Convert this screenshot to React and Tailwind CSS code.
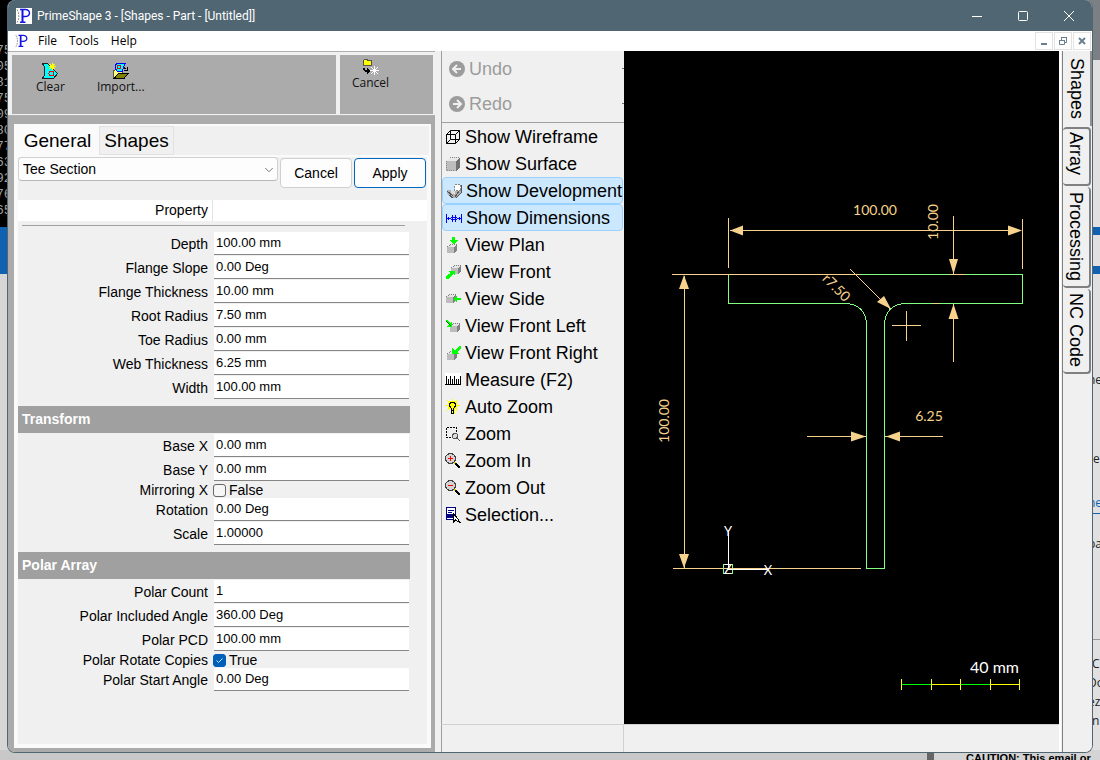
import { ChevronDown } from 'lucide-react';

const generalFields = [
    { id: 'depth', label: 'Depth', value: '100.00 mm' },
    { id: 'flange-slope', label: 'Flange Slope', value: '0.00 Deg' },
    { id: 'flange-thickness', label: 'Flange Thickness', value: '10.00 mm' },
    { id: 'root-radius', label: 'Root Radius', value: '7.50 mm' },
    { id: 'toe-radius', label: 'Toe Radius', value: '0.00 mm' },
    { id: 'web-thickness', label: 'Web Thickness', value: '6.25 mm' },
    { id: 'width', label: 'Width', value: '100.00 mm' }
];

const transformFields = [
    { id: 'base-x', label: 'Base X', value: '0.00 mm' },
    { id: 'base-y', label: 'Base Y', value: '0.00 mm' },
    { id: 'mirroring-x', label: 'Mirroring X', checked: false },
    { id: 'rotation', label: 'Rotation', value: '0.00 Deg' },
    { id: 'scale', label: 'Scale', value: '1.00000' }
];

const polarFields = [
    { id: 'polar-count', label: 'Polar Count', value: '1' },
    { id: 'polar-angle', label: 'Polar Included Angle', value: '360.00 Deg' },
    { id: 'polar-pcd', label: 'Polar PCD', value: '100.00 mm' },
    { id: 'polar-rotate', label: 'Polar Rotate Copies', checked: true },
    { id: 'polar-start', label: 'Polar Start Angle', value: '0.00 Deg' }
];

const Icon = ({ children }) => (
    <svg className="w-4 h-4 shrink-0" viewBox="0 0 16 16" fill="none" shapeRendering="crispEdges" aria-hidden="true">
        {children}
    </svg>
);

// Small shaded box used by the view icons
const Cube = ({ x, y }) => (
    <g transform={`translate(${x} ${y})`}>
        <path d="M0 3L3 0H10V6L7 9H0Z" fill="#e4e4e4" />
        <path d="M0 3H7V9H0Z" fill="#bcbcbc" />
        <path d="M7 3L10 0V6L7 9Z" fill="#808080" />
        <path d="M0.5 3L3 0.5H10" stroke="#808080" strokeDasharray="1 1" />
    </g>
);

const Magnifier = ({ minus }) => (
    <>
        <circle cx="5.5" cy="5.5" r="5" fill="#d4d4d4" stroke="#404040" />
        <path d="M3 5.5H8" stroke="#f00" />
        {!minus && <path d="M5.5 3V8" stroke="#f00" />}
        <path d="M9.5 9.5L11.5 11.5" stroke="#d8d800" strokeWidth="2" />
        <path d="M10.5 10.5L15 15" stroke="#000" strokeWidth="2" />
    </>
);

const viewItems = [
    {
        label: 'Show Wireframe',
        icon: <path d="M1.5 5.5H10.5V14.5H1.5ZM5.5 1.5H14.5V10.5H5.5ZM1.5 5.5L5.5 1.5M10.5 5.5L14.5 1.5M1.5 14.5L5.5 10.5M10.5 14.5L14.5 10.5" stroke="#000" shapeRendering="auto" />
    },
    {
        label: 'Show Surface',
        icon: (
            <>
                <path d="M1 5L5 1H15L11 5Z" fill="#e8e8e8" />
                <path d="M1 5H11V15H1Z" fill="#bdbdbd" />
                <path d="M11 5L15 1V11L11 15Z" fill="#707070" />
                <path d="M1.5 5V14.5H10M5 1.5H15" stroke="#888" strokeDasharray="1 1" />
            </>
        )
    },
    {
        label: 'Show Development',
        active: true,
        icon: (
            <>
                <path d="M8.5 1.5H14.5V7.5H8.5Z" fill="#fff" stroke="#888" strokeDasharray="2 1" />
                <path d="M1 7H4L7 10L9 8H15L14 12L10 15H6L1 11Z" fill="#b0b0b0" />
                <path d="M1 8L7 13M13 8L9 14M3 12L7 15" stroke="#555" />
                <path d="M5 8H9V11H6Z" fill="#ddd" />
                <path d="M15 2V10L10 15" stroke="#555" />
            </>
        )
    },
    {
        label: 'Show Dimensions',
        active: true,
        icon: <path d="M0.5 4V13M15.5 4V13M1 8.5H5M11 8.5H15M2.5 7V10M13.5 7V10M5 7.5H11M5 9.5H11M7 5L6 12M10 5L9 12" stroke="#00f" />
    },
    {
        label: 'View Plan',
        icon: (
            <>
                <Cube x={2} y={7} />
                <path d="M7 0H10V3H13L8.5 7.5L4 3H7Z" fill="#0f0" />
            </>
        )
    },
    {
        label: 'View Front',
        icon: (
            <>
                <Cube x={6} y={1} />
                <path d="M3 7H10V12L8 10L3 15H1V12L6 9Z" fill="#0f0" />
            </>
        )
    },
    {
        label: 'View Side',
        icon: (
            <>
                <Cube x={1} y={3} />
                <path d="M8 8L12 4V7H16V9H12V12Z" fill="#0f0" />
            </>
        )
    },
    {
        label: 'View Front Left',
        icon: (
            <>
                <Cube x={5} y={5} />
                <path d="M0 3L2 2L5 5L7 3V9H1L4 7Z" fill="#0f0" />
                <path d="M1.5 3.5L6 8" stroke="#087008" />
            </>
        )
    },
    {
        label: 'View Front Right',
        icon: (
            <>
                <Cube x={2} y={6} />
                <path d="M16 1V4L12 7L14 9H7V3L10 5L14 1Z" fill="#0f0" />
            </>
        )
    },
    {
        label: 'Measure (F2)',
        icon: (
            <>
                <path d="M0 1H16V13H0Z" fill="#fff" />
                <path d="M1.5 4V12M3.5 7V12M5.5 4V12M7.5 7V12M9.5 4V12M11.5 7V12M13.5 7V12M15.5 4V12M0 12.5H16" stroke="#000" />
            </>
        )
    },
    {
        label: 'Auto Zoom',
        icon: (
            <>
                <path d="M3 2H12V10H10V15H6V10H3Z" fill="#ff0" />
                <path d="M0 6.5H3M12 6.5H15M2 1L4 3M13 1L11 3M2 12L4 10M13 12L11 10M7.5 0V2" stroke="#ff0" />
                <path d="M6 9L4.5 7V5L6 3.5H9L10.5 5V7L9 9M6.5 9V14H8.5V9M6 11.5H9" stroke="#000" />
            </>
        )
    },
    {
        label: 'Zoom',
        icon: (
            <>
                <path d="M1.5 1.5H11.5V7M1.5 1.5V11.5H7" stroke="#000" strokeDasharray="2 1" />
                <circle cx="10" cy="10" r="2.5" stroke="#555" fill="#ddd" />
                <path d="M12 12L15 15" stroke="#554" />
            </>
        )
    },
    { label: 'Zoom In', icon: <Magnifier /> },
    { label: 'Zoom Out', icon: <Magnifier minus /> },
    {
        label: 'Selection...',
        icon: (
            <>
                <path d="M1.5 0.5H10.5V12.5H1.5Z" fill="#fff" stroke="#000080" />
                <path d="M3 3.5H9M3 5.5H7" stroke="#000080" />
                <path d="M1 7H9V11H1Z" fill="#000080" />
                <path d="M8.5 6.5V15L10.5 13L15 15.5L13 12Z" fill="#fff" stroke="#000" />
            </>
        )
    }
];

const Logo = ({ className }) => (
    <svg className={className} viewBox="0 0 16 16" fill="none" aria-hidden="true">
        <path d="M1 1.5C3.5 5 3.5 11 1 14.5" stroke="#888" strokeDasharray="2 1" />
        <path d="M4 1.5H10M4 14.2H9.5M9 1.5C15 1.2 15 8.8 9 8.5H7" stroke="#1414e0" strokeWidth="1.4" />
        <path d="M6.5 1.5V14" stroke="#1414e0" strokeWidth="2" />
    </svg>
);

const ClearIcon = () => (
    <Icon>
        <path d="M0.5 0.5H5.5L7.5 2.5H10.5V5.5L15.5 10.5L11.5 15.5H0.5L2.5 12V4Z" fill="#0ff" stroke="#222" />
        <circle cx="9.5" cy="10.5" r="2.5" stroke="#f00" />
        <path d="M10 0V7M6.5 3.5H13.5M7.5 1L12.5 6M12.5 1L7.5 6" stroke="#ff0" />
    </Icon>
);

const ImportIcon = () => (
    <Icon>
        <path d="M0.5 7.5L3.5 6.5H9.5V10.5H5.5L1.5 14.5H0.5Z" fill="#ffff80" stroke="#554" />
        <path d="M2.5 1.5L4.5 0.5H12.5L10.5 3.5L9.5 8.5H4.5L2.5 6Z" fill="#0ff" stroke="#00f" />
        <circle cx="6" cy="4" r="2" stroke="#f00" />
        <path d="M5.5 10.5H15L11 15.5H1Z" fill="#808000" stroke="#000" />
        <path d="M11 4.5L13.5 6.5M14.5 4V7.5H11" stroke="#000" />
    </Icon>
);

const CancelIcon = () => (
    <Icon>
        <path d="M0.5 1.5L1.5 0.5H4L5 1.5H8.5V6.5H0.5Z" fill="#ff0" stroke="#554" />
        <path d="M0 9H2V11H6V13H2L0 11Z" fill="#000" />
        <path d="M4 9L7 12L4 15Z" fill="#000" />
        <path d="M11.5 7V16M7 11.5H16M8 8L15 15M15 8L8 15" stroke="#fff" />
    </Icon>
);

const Field = ({ field }) => (
    <div className="flex items-start h-6">
        <label htmlFor={field.id} className="w-[190px] shrink-0 text-right text-sm leading-6">
            {field.label}
        </label>
        <input
            id={field.id}
            type="text"
            defaultValue={field.value}
            className="ml-1.5 mr-[18px] min-w-0 flex-1 h-[23px] pl-0.5 pb-0.5 bg-white border-b border-[#858585] text-[13px] outline-none"
        />
    </div>
);

const CheckField = ({ field }) => (
    <div className="flex items-center h-4">
        <label htmlFor={field.id} className="w-[190px] shrink-0 text-right text-sm leading-4">
            {field.label}
        </label>
        <span className="relative ml-[5px] w-[13px] h-[13px] shrink-0">
            <input
                id={field.id}
                type="checkbox"
                defaultChecked={field.checked}
                className="peer block appearance-none w-[13px] h-[13px] rounded-[3px] border border-[#666] bg-[#f6f6f6] checked:bg-[#005fb8] checked:border-[#005fb8]"
            />
            <svg className="absolute inset-0 hidden peer-checked:block pointer-events-none" viewBox="0 0 13 13" fill="none">
                <path d="M3.5 6.5L5.5 8.5L9.5 4.5" stroke="#d5e6f6" />
            </svg>
        </span>
        <span className="ml-[3px] text-sm leading-4">{field.checked ? 'True' : 'False'}</span>
    </div>
);

const FieldList = ({ fields }) =>
    fields.map((field) =>
        'checked' in field ? <CheckField key={field.id} field={field} /> : <Field key={field.id} field={field} />
    );

const SectionTitle = ({ children }) => (
    <h2 className="mt-1.5 mb-px mr-[17px] h-[27px] pl-1 bg-[#a0a0a0] text-white text-sm leading-[26px] font-bold">
        {children}
    </h2>
);

const PropertyPanel = () => (
    <div className="flex-1 flex flex-col bg-[#ababab] pl-1.5 pr-1 pt-2 pb-1">
        <div className="flex-1 flex flex-col bg-[#f0f0f0] border-2 border-[#fafafa]">
            <div className="flex items-start h-[29px] text-[19px]" role="tablist">
                <button role="tab" aria-selected="true" className="h-[29px] w-[83px] bg-[#fafafa] text-center leading-7">
                    General
                </button>
                <button role="tab" aria-selected="false" className="h-[29px] w-[75px] border border-[#e2e2e2] text-center leading-7">
                    Shapes
                </button>
            </div>
            <div className="flex-1 flex flex-col border-2 border-[#fafafa]">
                <div className="flex gap-0.5 pr-px">
                    <div className="relative flex-1">
                        <label htmlFor="section-type" className="sr-only">Section type</label>
                        <select
                            id="section-type"
                            className="appearance-none w-full h-6 pl-1 bg-[#fdfdfd] border border-[#d0d0d0] border-b-[#b8b8b8] rounded-sm text-sm leading-5"
                        >
                            <option>Tee Section</option>
                        </select>
                        <ChevronDown className="absolute right-0.5 top-1.5 w-3.5 h-3.5 text-[#666] pointer-events-none" strokeWidth={1.5} />
                    </div>
                    <button className="w-[72px] h-[30px] mt-px bg-[#fdfdfd] border border-[#d0d0d0] rounded text-sm">Cancel</button>
                    <button className="w-[72px] h-[30px] mt-px bg-[#fdfdfd] border border-[#0067c0] rounded text-sm">Apply</button>
                </div>
                <div className="mt-3 flex h-[21px] bg-white text-sm leading-[21px]">
                    <div className="w-[195px] pr-1 text-right border-r border-[#e2e2e2]">Property</div>
                </div>
                <hr className="mt-1 mb-1.5 ml-1 mr-[22px] border-[#a0a0a0]" />
                <FieldList fields={generalFields} />
                <SectionTitle>Transform</SectionTitle>
                <FieldList fields={transformFields} />
                <SectionTitle>Polar Array</SectionTitle>
                <FieldList fields={polarFields} />
            </div>
        </div>
    </div>
);

const ToolButton = ({ icon, children }) => (
    <button className="flex flex-col items-center text-xs leading-4 text-[#111]">
        {icon}
        {children}
    </button>
);

const ViewToolbar = () => (
    <nav className="w-[183px] shrink-0 flex flex-col border-l border-[#a0a0a0] text-lg leading-[26px]">
        <div className="flex flex-col pb-px text-[#9c9c9c] border-b border-[#a0a0a0]">
            <button disabled className="h-[35px] flex items-center gap-1 pl-[7px]">
                <svg className="w-4 h-4" viewBox="0 0 16 16" fill="none">
                    <circle cx="8" cy="8" r="8" fill="#9c9c9c" />
                    <path d="M12 8H4.5M8 4L4 8L8 12" stroke="#f0f0f0" strokeWidth="2" />
                </svg>
                <span className="flex-1 text-left">Undo</span>
                <span className="w-0.5 h-px bg-[#777]" />
            </button>
            <button disabled className="h-[35px] flex items-center gap-1 pl-[7px]">
                <svg className="w-4 h-4" viewBox="0 0 16 16" fill="none">
                    <circle cx="8" cy="8" r="8" fill="#9c9c9c" />
                    <path d="M4 8H11.5M8 4L12 8L8 12" stroke="#f0f0f0" strokeWidth="2" />
                </svg>
                <span className="flex-1 text-left">Redo</span>
                <span className="w-0.5 h-px bg-[#777]" />
            </button>
        </div>
        <div className="flex flex-col">
            {viewItems.map((item) => (
                <button
                    key={item.label}
                    className={
                        item.active
                            ? 'h-[27px] flex items-center gap-1 pl-[3px] mr-px whitespace-nowrap rounded-sm border border-[#99d1ff] bg-[#cce8ff]'
                            : 'h-[27px] flex items-center gap-1 pl-[3px] whitespace-nowrap'
                    }
                >
                    <Icon>{item.icon}</Icon>
                    {item.label}
                </button>
            ))}
        </div>
    </nav>
);

const Drawing = () => (
    <svg className="flex-1 min-w-0 w-full bg-black" viewBox="0 0 435 673" fill="none" fontFamily="Lato, 'Liberation Sans', sans-serif">
        {/* Tee profile */}
        <path
            d="M104.5 223.5H398.5V252.5H282C268 252.5 260.5 261 260.5 275V517.5H242.5V275C242.5 261 235 252.5 221 252.5H104.5Z"
            stroke="#80ff80"
            shapeRendering="crispEdges"
        />

        {/* Extension and dimension lines */}
        <g stroke="#f7d28c" shapeRendering="crispEdges">
            <path d="M104.5 167V217M398.5 168V218M106 179.5H397" />
            <path d="M48 223.5H236M49 517.5H237M60.5 225V517" />
            <path d="M329.5 165V223M329.5 253V311M326 223.5H341M309 252.5H315" />
            <path d="M183 385.5H242M261 385.5H319" />
            <path d="M268 274.5H297M282.5 260V290" />
            <path d="M226 218L266 258" />
        </g>
        <g fill="#f7d28c">
            <path d="M106 179.5L119 174.5V184.5ZM398 179.5L384 174.5V184.5Z" />
            <path d="M60 224L55 238H65ZM60 517L55 503H65Z" />
            <path d="M329.5 223L325 208H334ZM329.5 253L324.5 268H334.5Z" />
            <path d="M242 385.5L227 380.5V390.5ZM262 385.5L276 380.5V390.5Z" />
            <path d="M267 258L260 245L253 251Z" />
        </g>
        <g fill="#f7d28c" fontSize="14" textAnchor="middle">
            <text x="251" y="164">100.00</text>
            <text transform="translate(314 171) rotate(-90)">10.00</text>
            <text transform="translate(45 370) rotate(-90)">100.00</text>
            <text x="305" y="370">6.25</text>
            <text transform="translate(209 240) rotate(45)">r7.50</text>
        </g>

        {/* Origin marker */}
        <path d="M99.5 513.5H108.5V522.5H99.5Z" stroke="#80ff80" shapeRendering="crispEdges" />
        <path d="M104.5 479V518.5H144" stroke="#fff" shapeRendering="crispEdges" />
        <g fill="#fff" fontSize="13" textAnchor="middle">
            <text x="104" y="485">Y</text>
            <text x="144" y="524">X</text>
            <text x="104" y="523">Z</text>
        </g>

        {/* Scale bar */}
        <text x="395" y="622" fill="#fff" fontSize="16" textAnchor="end">40 mm</text>
        <g shapeRendering="crispEdges">
            <path d="M277 633.5H307M336 633.5H366" stroke="#0f0" />
            <path d="M307 633.5H336M366 633.5H395M277.5 628V639M307.5 628V639M336.5 628V639M366.5 628V639M395.5 628V639" stroke="#ff0" />
        </g>
    </svg>
);

const SideTabs = () => (
    <aside className="w-[33px] shrink-0 flex bg-[#f0f0f0]">
        <div className="w-1 shrink-0 border-l-2 border-white border-r border-r-[#808080]" />
        <div role="tablist" className="flex-1 flex flex-col items-start gap-px text-lg leading-[26px]">
            <button role="tab" aria-selected="true" className="w-full h-[75px] flex items-center justify-center bg-[#f0f0f0] border-r-2 border-[#909090] [writing-mode:vertical-rl]">
                Shapes
            </button>
            <button role="tab" aria-selected="false" className="w-7 h-[59px] pb-1.5 flex items-center justify-center border-2 border-l-0 border-[#808080] rounded-sm [writing-mode:vertical-rl]">
                Array
            </button>
            <button role="tab" aria-selected="false" className="w-7 h-[101px] flex items-center justify-center border-r-2 border-b-2 border-[#808080] rounded-sm [writing-mode:vertical-rl]">
                Processing
            </button>
            <button role="tab" aria-selected="false" className="w-7 h-[85px] flex items-center justify-center border-r-2 border-b-2 border-[#808080] rounded-sm [writing-mode:vertical-rl]">
                NC Code
            </button>
        </div>
    </aside>
);

const TitleBar = () => (
    <header className="h-[31px] flex items-center bg-[#516673] text-white text-xs font-[Roboto,sans-serif]">
        <Logo className="ml-2 w-4 h-4 bg-white" />
        <h1 className="ml-[5px] flex-1">PrimeShape 3 - [Shapes - Part - [Untitled]]</h1>
        <button aria-label="Minimize" className="w-[46px] h-full flex items-center justify-center">
            <svg className="w-2.5 h-2.5" viewBox="0 0 10 10"><path d="M0 5.5H10" stroke="#fff" /></svg>
        </button>
        <button aria-label="Maximize" className="w-[46px] h-full flex items-center justify-center">
            <svg className="w-2.5 h-2.5" viewBox="0 0 10 10"><rect x="0.5" y="0.5" width="9" height="9" rx="1" fill="none" stroke="#fff" /></svg>
        </button>
        <button aria-label="Close" className="w-[46px] h-full flex items-center justify-center">
            <svg className="w-2.5 h-2.5" viewBox="0 0 10 10"><path d="M0 0L10 10M10 0L0 10" stroke="#fff" /></svg>
        </button>
    </header>
);

const MenuBar = () => (
    <div className="h-5 flex items-center bg-white text-xs font-['Open_Sans',sans-serif]">
        <Logo className="ml-[7px] w-3.5 h-3.5" />
        <nav className="flex-1 flex gap-3 ml-[9px]">
            <button>File</button>
            <button>Tools</button>
            <button>Help</button>
        </nav>
        <div className="flex gap-px mr-px">
            <button aria-label="Minimize document" className="w-[18px] h-[18px] flex items-center justify-center border border-[#e2e2e2]">
                <svg className="w-2 h-2" viewBox="0 0 8 8"><path d="M1 7H7" stroke="#6c7f90" strokeWidth="2" /></svg>
            </button>
            <button aria-label="Restore document" className="w-[18px] h-[18px] flex items-center justify-center border border-[#e2e2e2]">
                <svg className="w-2 h-2" viewBox="0 0 8 8" fill="none" stroke="#6c7f90">
                    <path d="M0.5 3.5H5.5V7.5H0.5ZM2.5 3V0.5H7.5V5.5H6M0 3.5H6M2 0.5H8" />
                </svg>
            </button>
            <button aria-label="Close document" className="w-[18px] h-[18px] flex items-center justify-center border border-[#e2e2e2]">
                <svg className="w-2 h-2" viewBox="0 0 8 8"><path d="M1 1L7 7M7 1L1 7" stroke="#6c7f90" strokeWidth="2" /></svg>
            </button>
        </div>
    </div>
);

// Whatever shows around the edges of the window
const Desktop = () => (
    <div className="absolute inset-0 flex flex-col overflow-hidden bg-[#cfcfcf]">
        <div className="flex-1 min-h-0 flex justify-between">
            <div className="w-4 flex flex-col overflow-hidden">
                <div className="h-[227px] pt-[43px] bg-black text-[#a0a0a0] text-[13px] leading-4 font-['Liberation_Mono',monospace]">
                    {['75', '05', '81', '75', '09', '80', '77', '63', '92', '76', '65'].map((row, i) => (
                        <div key={i} className="-ml-1">{row}</div>
                    ))}
                </div>
                <div className="h-[47px] bg-[#1062b0]" />
                <div className="flex-1 bg-[#d6d6d6]" />
            </div>
            <div className="w-4 flex flex-col overflow-hidden bg-[#e0e0e0] pl-1 text-xs leading-4 text-[#222] font-['Open_Sans',sans-serif]">
                <div className="-ml-1 h-[60px] shrink-0 bg-[#7b8084]" />
                <div className="-ml-1 mt-[167px] h-2 shrink-0 bg-[#1062b0]" />
                <div className="-ml-1 mt-[31px] h-2 shrink-0 bg-[#1062b0]" />
                <div className="mt-[98px]">ne</div>
                <div className="mt-[63px]">re</div>
                <div className="mt-7 text-[#1062b0]">ne</div>
                <div className="-ml-1 mt-0.5 h-px shrink-0 bg-[#1062b0]" />
                <div className="mt-[22px]">pa</div>
                <div className="-ml-1 mt-[87px] h-px shrink-0 bg-[#999]" />
                <div className="mt-4 pl-1">C</div>
                <div className="mt-[3px]">Do</div>
                <div className="mt-[3px]">ez</div>
                <div className="mt-[3px] pl-1">n</div>
            </div>
        </div>
        <div className="h-2.5 shrink-0 flex justify-end overflow-hidden bg-[#c8c8c8]">
            <div className="w-[7px] bg-[#666]" />
            <div className="w-[166px] pl-8 bg-[#d4d4d4] text-[11px] leading-4 font-bold whitespace-nowrap">
                CAUTION: This email or
            </div>
        </div>
    </div>
);

const App = () => {
    return (
        <div className="relative min-h-screen flex flex-col font-['Liberation_Sans',Arial,sans-serif] text-black">
            <Desktop />
            <main className="relative flex-1 flex flex-col mx-[7px] mb-[7px] overflow-hidden rounded-lg border-x border-b border-[#516673] bg-[#f0f0f0]">
                <TitleBar />
                <MenuBar />
                <div className="flex-1 flex">
                    {/* Left column */}
                    <div className="w-[427px] shrink-0 flex flex-col">
                        <div className="flex gap-1 h-[65px] pl-1 pr-0.5 pt-[3px] pb-px border-t border-b border-[#b0b0b0] font-['Open_Sans',sans-serif]">
                            <div className="flex-1 flex items-start gap-8 pl-6 pt-2 bg-[#ababab]">
                                <ToolButton icon={<ClearIcon />}>Clear</ToolButton>
                                <ToolButton icon={<ImportIcon />}>Import...</ToolButton>
                            </div>
                            <div className="w-[93px] flex items-start pl-3 pt-1 bg-[#ababab]">
                                <ToolButton icon={<CancelIcon />}>Cancel</ToolButton>
                            </div>
                        </div>
                        <PropertyPanel />
                    </div>

                    {/* Toolbar, canvas and status bar */}
                    <div className="flex-1 min-w-0 flex flex-col ml-1.5">
                        <div className="flex-1 flex">
                            <ViewToolbar />
                            <Drawing />
                        </div>
                        <footer className="h-7 flex border-t border-l border-[#d0d0d0] border-l-[#a0a0a0]">
                            <div className="w-[182px] border-r border-[#d0d0d0]" />
                        </footer>
                    </div>

                    <SideTabs />
                </div>
            </main>
        </div>
    );
};

export default App;
